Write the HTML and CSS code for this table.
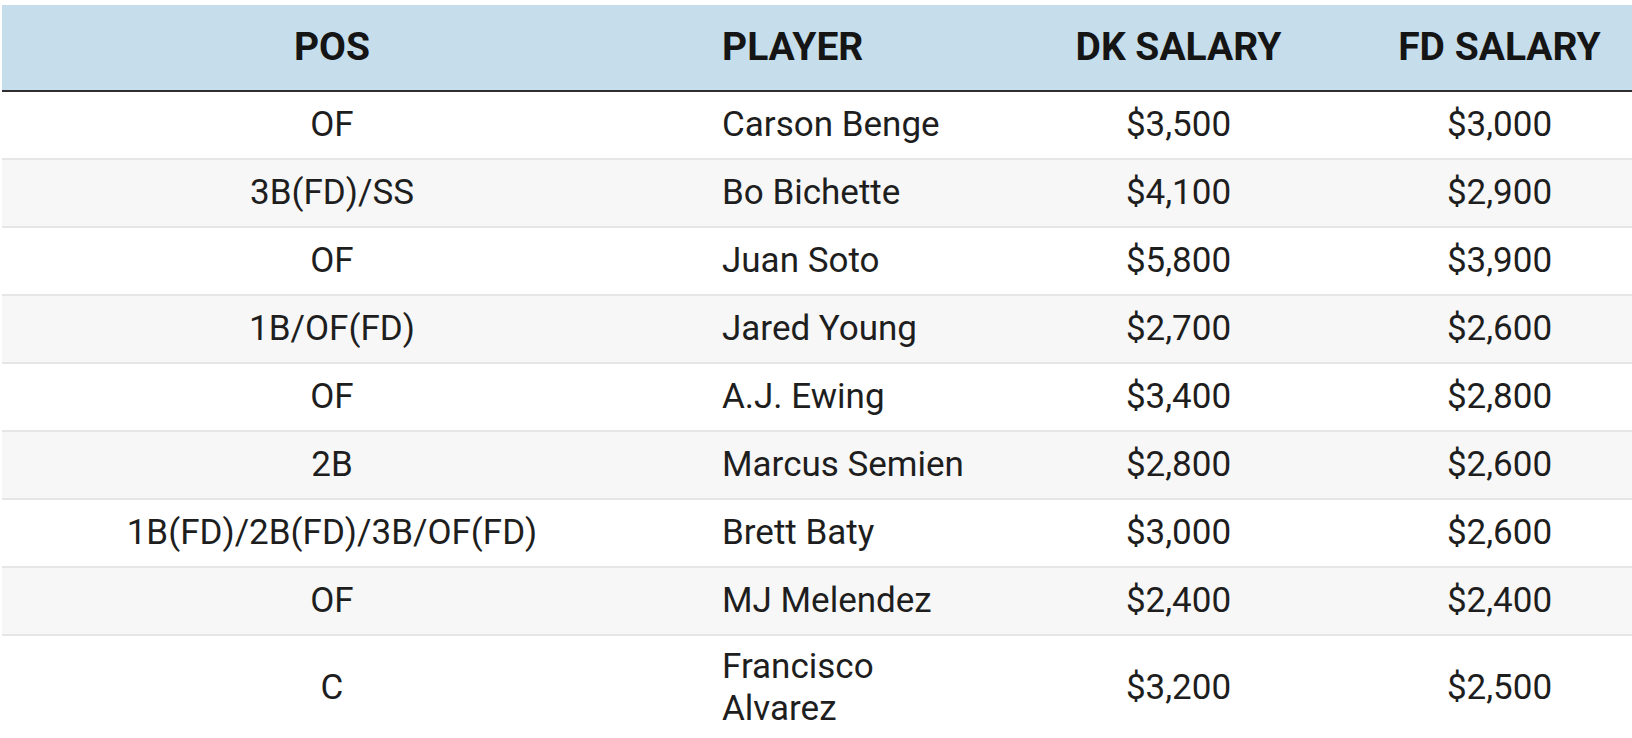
FILE: index.html
```html
<!DOCTYPE html>
<html lang="en">
<head>
<meta charset="utf-8">
<title>Salaries</title>
<link rel="stylesheet" href="styles.css">
</head>
<body>
<div class="wrap">
<table class="salaries">
  <colgroup>
    <col class="c-pos">
    <col class="c-player">
    <col class="c-dk">
    <col class="c-fd">
  </colgroup>
  <thead>
    <tr><th>POS</th><th class="left">PLAYER</th><th>DK SALARY</th><th>FD SALARY</th></tr>
  </thead>
  <tbody>
    <tr><td>OF</td><td class="left">Carson Benge</td><td>$3,500</td><td>$3,000</td></tr>
    <tr><td>3B(FD)/SS</td><td class="left">Bo Bichette</td><td>$4,100</td><td>$2,900</td></tr>
    <tr><td>OF</td><td class="left">Juan Soto</td><td>$5,800</td><td>$3,900</td></tr>
    <tr><td>1B/OF(FD)</td><td class="left">Jared Young</td><td>$2,700</td><td>$2,600</td></tr>
    <tr><td>OF</td><td class="left">A.J. Ewing</td><td>$3,400</td><td>$2,800</td></tr>
    <tr><td>2B</td><td class="left">Marcus Semien</td><td>$2,800</td><td>$2,600</td></tr>
    <tr><td>1B(FD)/2B(FD)/3B/OF(FD)</td><td class="left">Brett Baty</td><td>$3,000</td><td>$2,600</td></tr>
    <tr><td>OF</td><td class="left">MJ Melendez</td><td>$2,400</td><td>$2,400</td></tr>
    <tr><td>C</td><td class="left">Francisco Alvarez</td><td>$3,200</td><td>$2,500</td></tr>
  </tbody>
</table>
</div>
</body>
</html>
```
FILE: styles.css
```css
html, body {
  margin: 0;
  padding: 0;
  background: #ffffff;
  overflow: hidden;
}
body {
  padding: 5px 0 0 2px;
  font-family: Roboto, "Liberation Sans", Arial, sans-serif;
  color: #1e1e1e;
}
.wrap {
  width: 1630px;
  overflow: hidden;
}
.salaries {
  border-collapse: collapse;
  table-layout: fixed;
  width: 1658px;
}
.c-pos { width: 660px; }
.c-player { width: 356px; }
.c-dk { width: 321px; }
.c-fd { width: 321px; }
.salaries th {
  background: #c6deeb;
  color: #151515;
  font-weight: 700;
  font-size: 39px;
  line-height: 47px;
  padding: 19px 0;
  text-align: center;
  border-bottom: 2px solid #2e2e2e;
}
.salaries td {
  font-size: 35px;
  line-height: 42px;
  padding: 12px 0;
  text-align: center;
  border-bottom: 2px solid #e6e6e6;
}
.salaries tbody tr:last-child td {
  padding-top: 10px;
}
.salaries tbody tr:nth-child(even) td {
  background: #f7f7f7;
}
.salaries .left {
  text-align: left;
  padding-left: 60px;
  padding-right: 40px;
}
```
